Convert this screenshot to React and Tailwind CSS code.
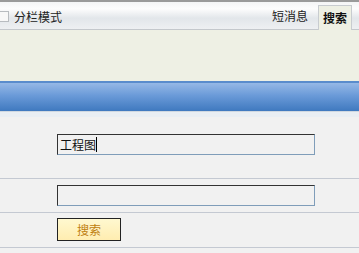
export default function App() {
  const font = { fontFamily: '"Noto Sans CJK SC", "Liberation Sans", sans-serif' };
  return (
    <div className="w-[359px] h-[253px] overflow-hidden bg-[#f1f1f1] text-[12px]" style={font}>
      {/* top bar */}
      <div className="h-[30px] border-t-2 border-[#9a9a9a] border-b border-b-[#c4c8cc] bg-[linear-gradient(#f4f5f6,#fdfdfd_25%,#e2e6ea_60%,#eef0f2)] flex items-end justify-between">
        <div className="flex items-center self-center gap-[5px] pt-[2px]">
          <div className="w-[9px] h-[11px] border border-[#b8bcc0] bg-[#f8f8f8] border-l-0"></div>
          <span className="text-[12px] leading-none text-[#222]">分栏模式</span>
        </div>
        <div className="flex items-end h-full">
          <span className="text-[12px] leading-none text-[#222] mb-[7px] mr-[10px]">短消息</span>
          <div className="h-[25px] px-[4px] bg-[#eef0e4] border-l border-r border-t border-[#c8ccd0] flex items-center mr-[7px] -mb-px">
            <span className="text-[12px] leading-none font-bold text-[#111]">搜索</span>
          </div>
        </div>
      </div>
      {/* beige area */}
      <div className="h-[51px] bg-[#eef0e4]"></div>
      {/* blue bar */}
      <div className="h-[30px] border-t-2 border-[#5a8ccc] bg-[linear-gradient(#96b8e6,#6a9ad8_45%,#3f79bf)]"></div>
      <div className="h-[6px] bg-[#e9eef3] border-t border-[#d0d8e0]"></div>
      {/* row 1 */}
      <div className="h-[62px] pl-[57px] pt-[17px] border-b border-[#c4c9d2]">
        <div className="w-[258px] h-[21px] border border-t-[#333] border-l-[#333] border-r-[#7f9db9] border-b-[#7f9db9] bg-[#f1f1f1] flex items-center pl-[2px]">
          <span className="text-[12px] leading-none text-[#111]">工程图</span>
          <span className="w-px h-[15px] bg-black"></span>
        </div>
      </div>
      {/* row 2 */}
      <div className="h-[34px] pl-[57px] pt-[6px] border-b border-[#c4c9d2]">
        <div className="w-[258px] h-[21px] border border-t-[#333] border-l-[#333] border-r-[#7f9db9] border-b-[#7f9db9] bg-[#f1f1f1]"></div>
      </div>
      {/* row 3 */}
      <div className="h-[35px] pl-[57px] pt-[5px] border-b border-[#c4c9d2]">
        <div className="w-[64px] h-[23px] border border-[#222] bg-[linear-gradient(#fff8d0,#ffedb0)] flex items-center justify-center">
          <span className="text-[12px] leading-none text-[#c08010]">搜索</span>
        </div>
      </div>
    </div>
  );
}
